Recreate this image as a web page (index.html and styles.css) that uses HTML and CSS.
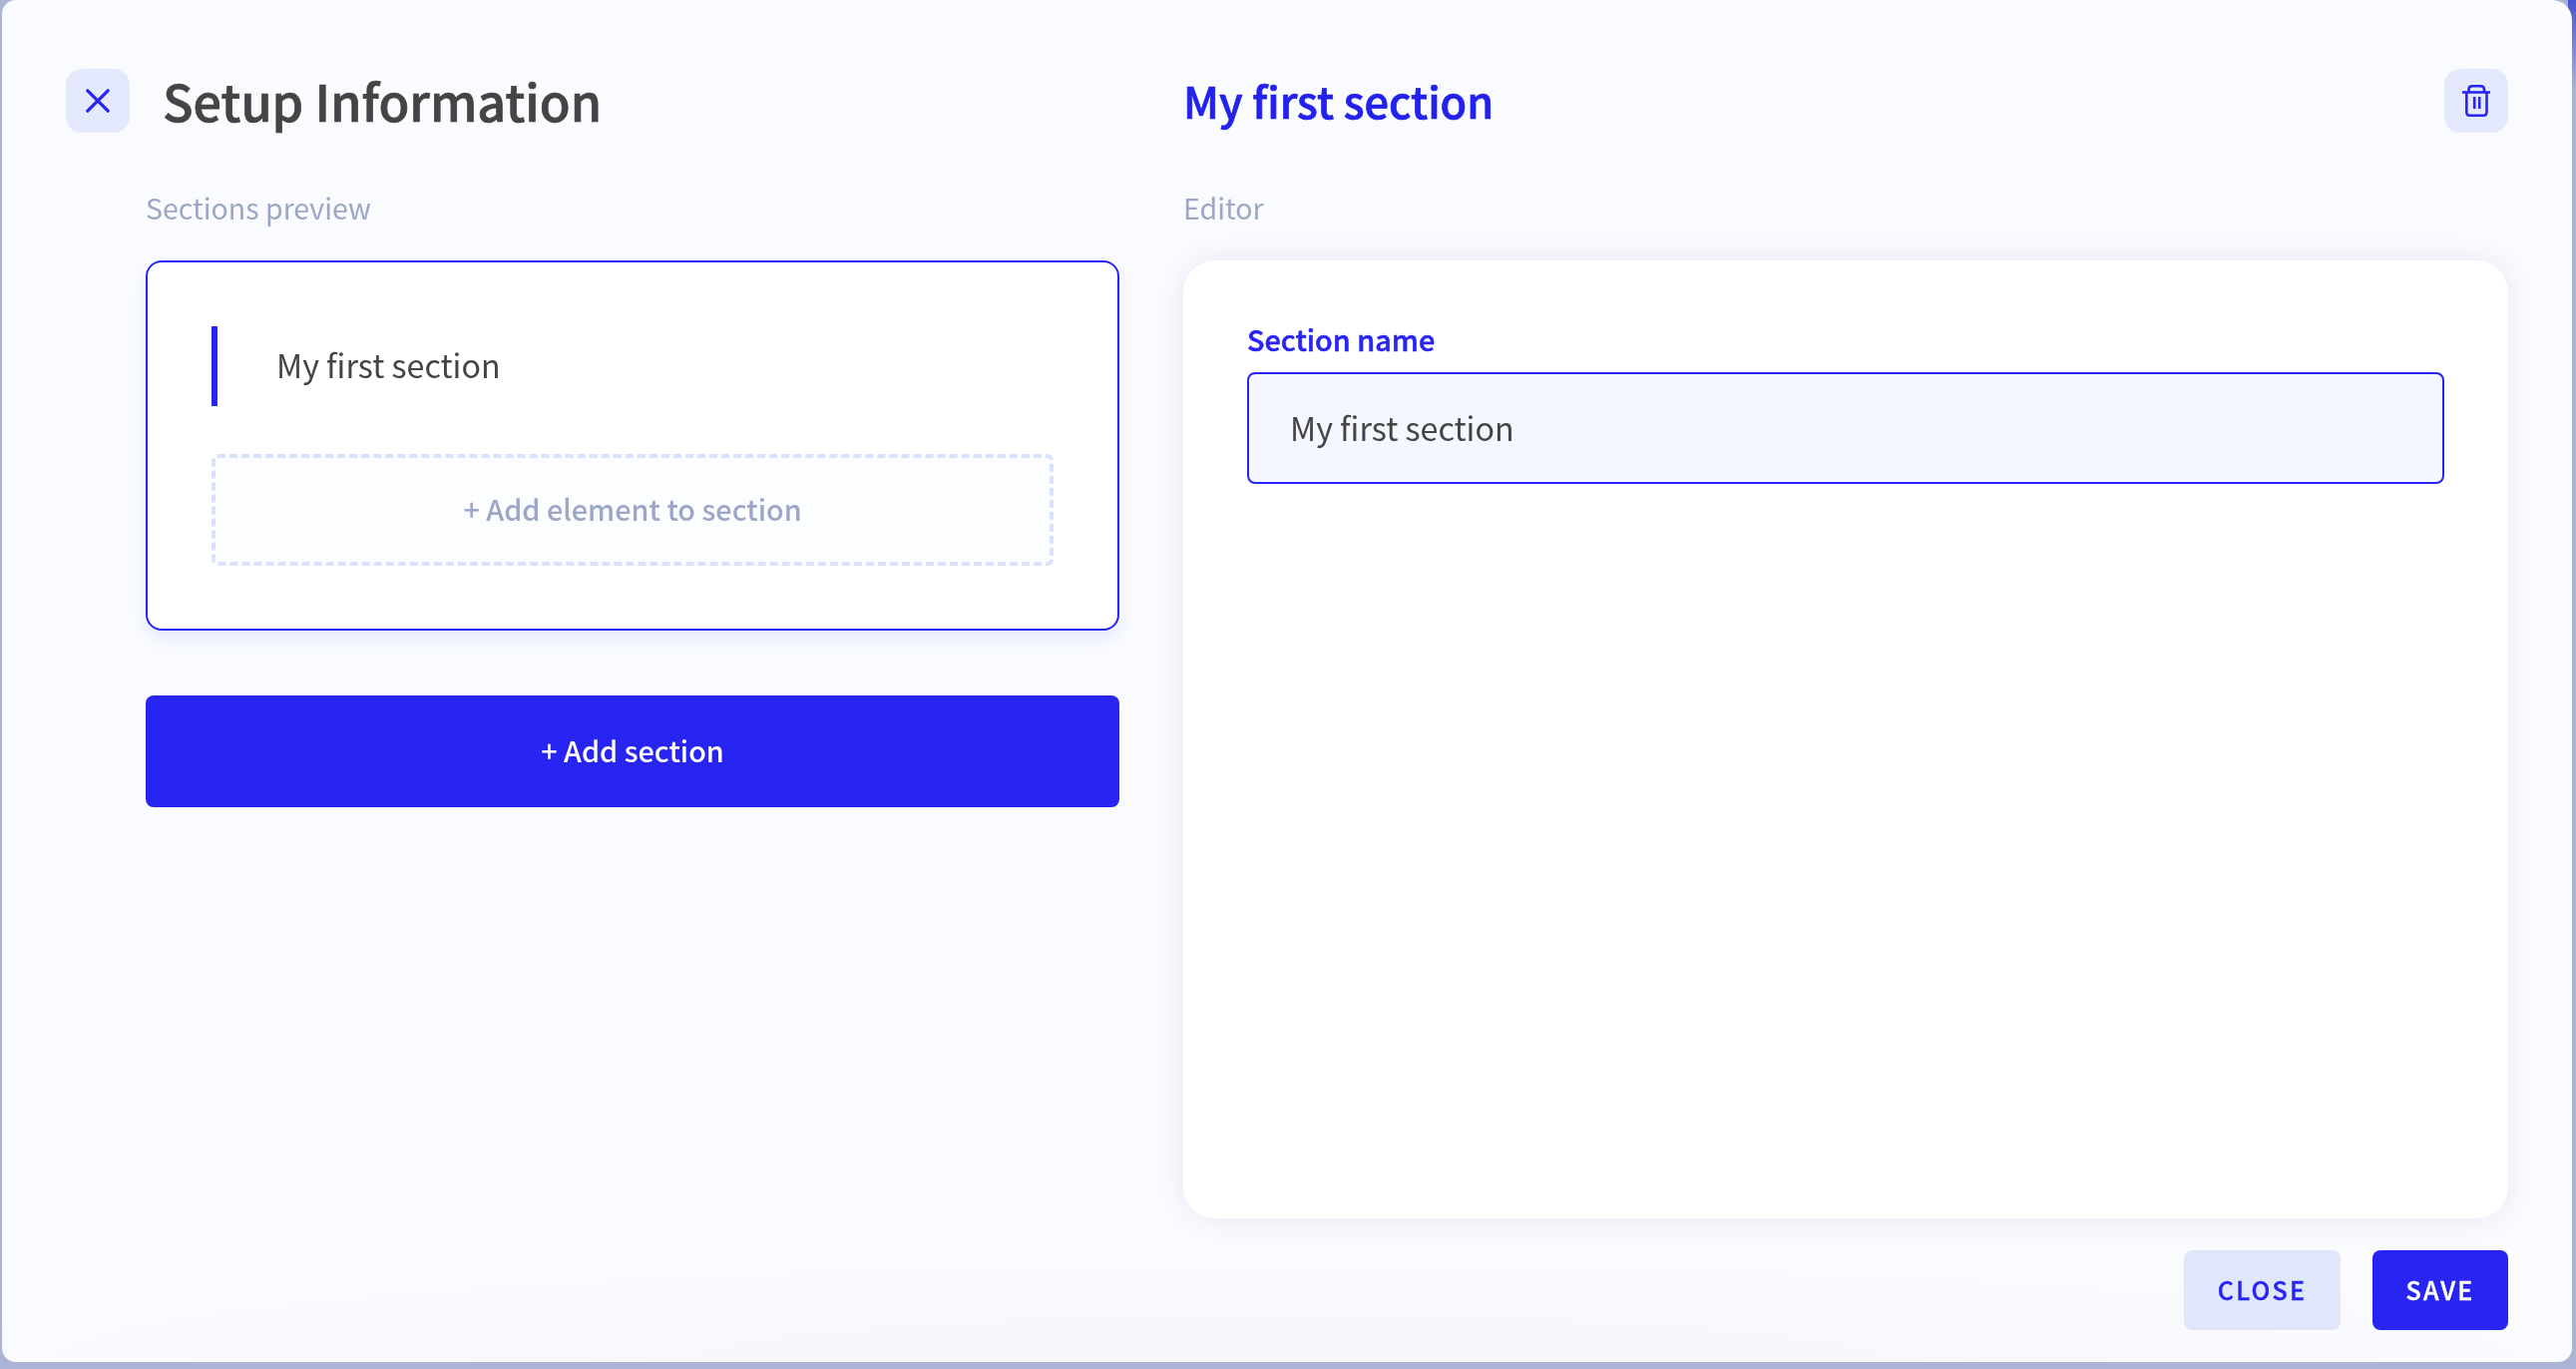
FILE: index.html
```html
<!DOCTYPE html>
<html lang="en">
<head>
<meta charset="utf-8">
<title>Setup Information</title>
<link rel="stylesheet" href="styles.css">
</head>
<body>
<div class="modal">
  <div class="columns">
    <section class="pane pane-left">
      <header class="pane-head">
        <button class="icon-btn close-x" aria-label="Close">
          <svg width="24" height="24" viewBox="0 0 24 24" fill="none" stroke="#2825f2" stroke-width="3.2" stroke-linecap="round"><path d="M1.800 1.800L22.200 22.200M22.200 1.800L1.800 22.200"/></svg>
        </button>
        <h1 class="title">Setup Information</h1>
      </header>
      <div class="pane-body">
        <div class="caption">Sections preview</div>
        <div class="preview-card">
          <div class="section-row">My first section</div>
          <div class="add-element">+ Add element to section</div>
        </div>
        <button class="add-section">+ Add section</button>
      </div>
    </section>
    <section class="pane pane-right">
      <header class="pane-head head-between">
        <h2 class="section-title">My first section</h2>
        <button class="icon-btn" aria-label="Delete">
          <svg width="28" height="32" viewBox="0 0 28 32" fill="none" stroke="#2825f2" stroke-width="2.6" stroke-linejoin="round"><path d="M0 7.5H28"/><path d="M6.5 7.5V4.5A3.5 3.5 0 0 1 10 1.3H18.500A3.500 3.500 0 0 1 22 4.500V7.500"/><path d="M4.300 7.500V27.500A3 3 0 0 0 7.300 30.700H21.500A3 3 0 0 0 24.500 27.500V7.500"/><path d="M12.200 12V24M17.200 12V24"/></svg>
        </button>
      </header>
      <div class="caption">Editor</div>
      <div class="editor-card">
        <label class="field-label" for="name">Section name</label>
        <input class="field-input" id="name" value="My first section">
      </div>
    </section>
  </div>
  <footer class="footer">
    <button class="btn btn-light">CLOSE</button>
    <button class="btn btn-primary">SAVE</button>
  </footer>
</div>
</body>
</html>
```
FILE: styles.css
```css
* { box-sizing: border-box; }
html, body { height: 100%; }
body {
  margin: 0;
  background: linear-gradient(to bottom, #4654d0 0, #abb4d4 90px) right top / 8px 100% no-repeat, #abb4d4;
  font-family: "Noto Sans CJK SC", "Noto Sans", sans-serif;
  overflow: hidden;
}
button, input { font-family: inherit; }
.modal {
  height: 1365px;
  margin: 0 4px 0 2px;
  padding: 69px 64px 32px 64px;
  background: radial-gradient(ellipse 55% 110px at 50% 100%, #f5f6fa, rgba(245, 246, 250, 0)), #f9fbff;
  border-radius: 14px 20px 14px 14px;
  display: flex;
  flex-direction: column;
  will-change: opacity;
}
.columns { flex: 1; display: flex; gap: 64px; min-height: 0; }
.pane { display: flex; flex-direction: column; }
.pane-left { width: 1056px; }
.pane-right { width: 1328px; }
.pane-head { display: flex; align-items: flex-start; height: 64px; }
.head-between { justify-content: space-between; }
.icon-btn {
  flex: none;
  width: 64px; height: 64px; padding: 0; border: 0;
  display: flex; align-items: center; justify-content: center;
  background: #e4e9fd; border-radius: 16px;
}
.close-x { margin-right: 33px; }
.title { margin: 0; font-size: 50.300px; line-height: 62px; font-weight: 500; -webkit-text-stroke: .7px #444; color: #444; }
.section-title { margin: 0; font-size: 43.300px; line-height: 62px; font-weight: 500; -webkit-text-stroke: .7px #2321ec; color: #2321ec; }
.pane-body { margin-left: 80px; display: flex; flex-direction: column; }
.caption { margin-top: 56px; height: 40px; font-size: 28.500px; line-height: 37px; color: #9ca6c6; }
.preview-card {
  margin-top: 32px;
  padding: 64px;
  height: 371px;
  background: #fff;
  border: 2px solid #2825f2;
  border-radius: 16px;
  box-shadow: 0 8px 16px rgba(70, 90, 230, .1);
}
.section-row {
  height: 80px; padding-left: 59px;
  border-left: 6px solid #2825f2;
  font-size: 32.200px; line-height: 76px; color: #444;
}
.add-element {
  margin-top: 48px; height: 112px; padding-bottom: 3px;
  border: 4px dashed #d8e2fc; border-radius: 6px;
  background: #fcfdff;
  display: flex; align-items: center; justify-content: center;
  font-size: 28.800px; font-weight: 500; color: #9ca6c6;
}
.add-section {
  margin-top: 65px; height: 112px; padding-bottom: 4px; border: 0; border-radius: 8px;
  background: #2825f2; color: #fff;
  font-size: 28.800px; font-weight: 500;
}
.editor-card {
  flex: 1;
  margin-top: 32px;
  padding: 60px 64px;
  background: #fff;
  border-radius: 32px;
  box-shadow: 0 0 32px rgba(20, 30, 80, .08);
  display: flex; flex-direction: column;
}
.field-label { height: 52px; font-size: 28.800px; line-height: 38px; font-weight: 500; -webkit-text-stroke: .5px #2825f2; color: #2825f2; }
.field-input {
  height: 112px; padding: 0 41px 3px;
  background: #f4f7ff;
  border: 2px solid #2825f2; border-radius: 8px;
  font-size: 32.200px; color: #444; outline: 0;
}
.footer { margin-top: 32px; display: flex; justify-content: flex-end; gap: 32px; }
.btn {
  height: 80px; padding: 0 0 3px; border: 0; border-radius: 8px;
  font-size: 25px; font-weight: 500; letter-spacing: 2.200px; -webkit-text-stroke: .4px;
}
.btn-light { width: 157px; background: #e1e7fb; color: #2825f2; }
.btn-primary { width: 136px; background: #2825f2; color: #fff; }
```
